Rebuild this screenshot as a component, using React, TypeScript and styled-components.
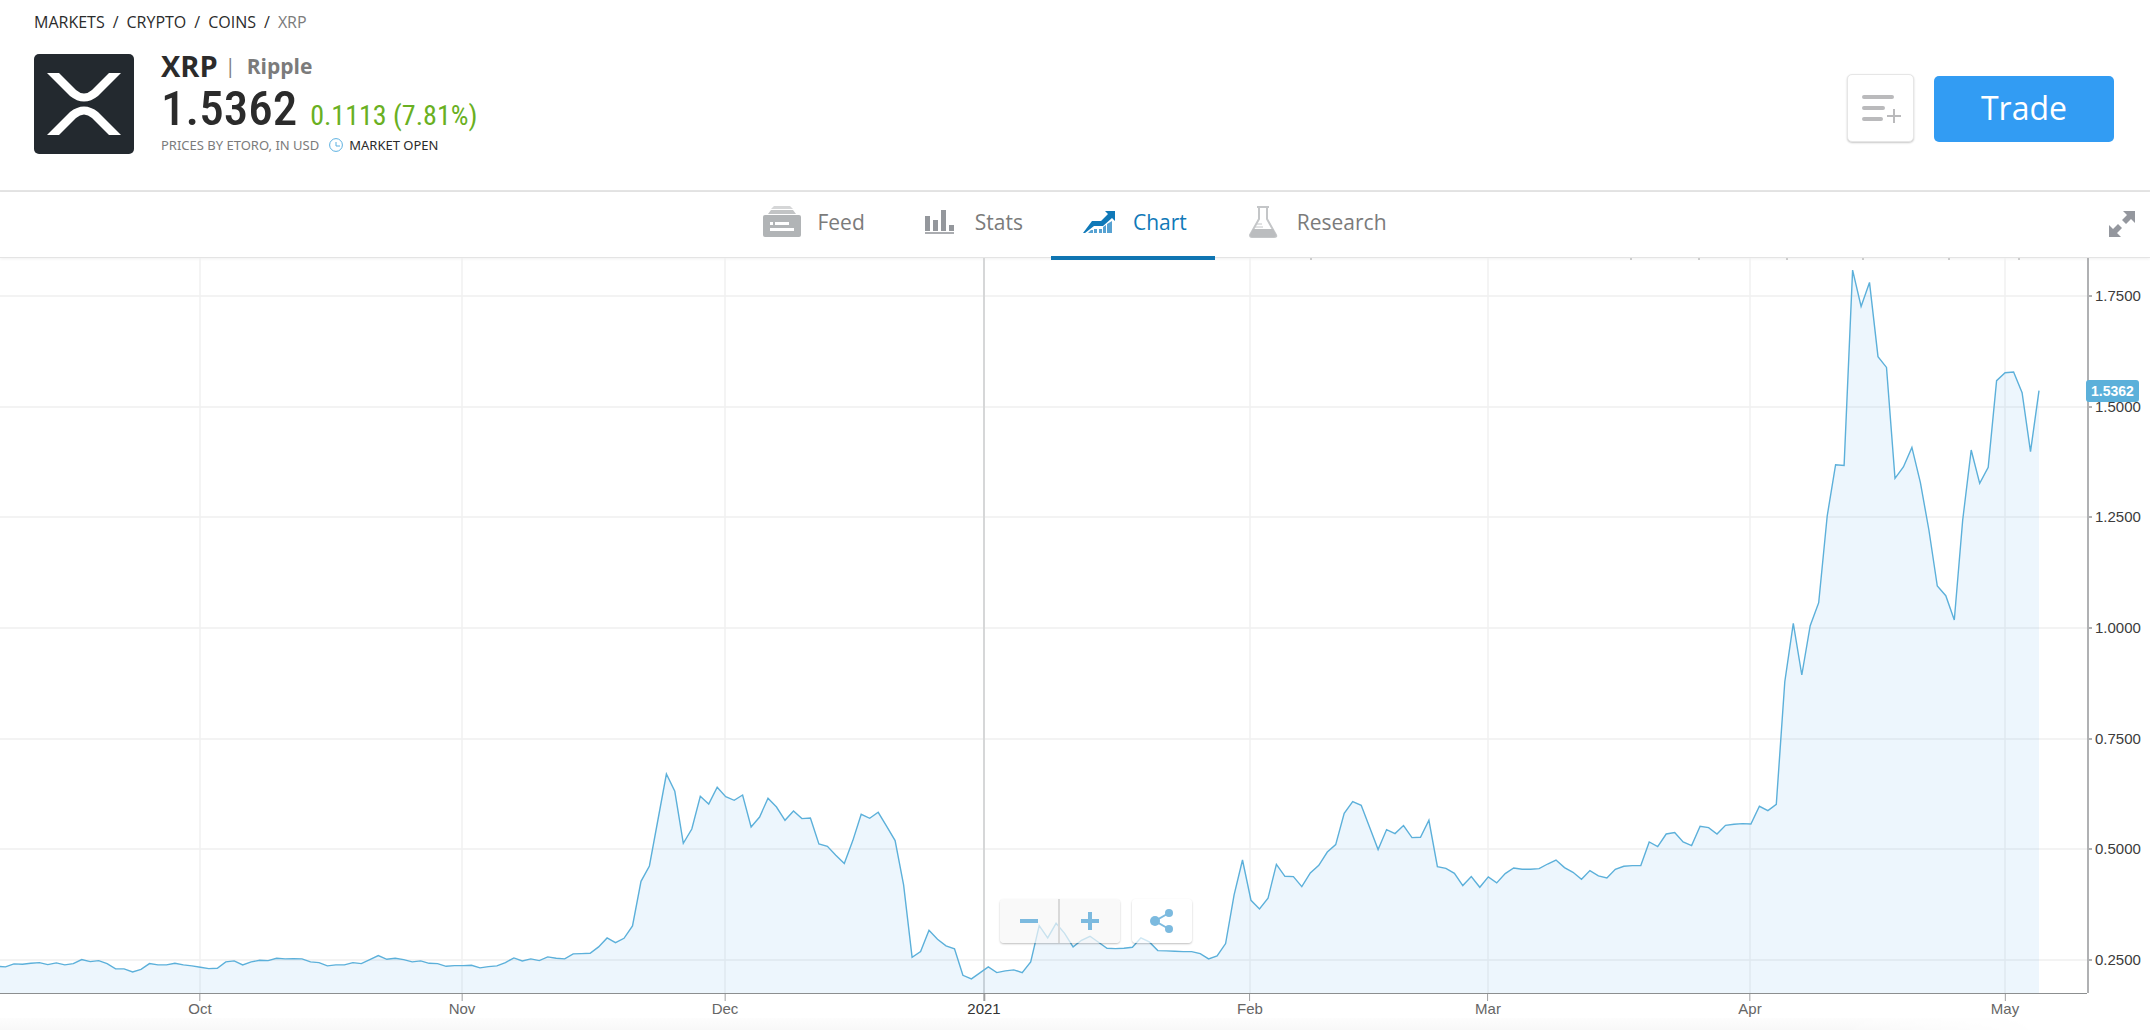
import React from "react";
import styled, { createGlobalStyle, css } from "styled-components";

const GlobalStyle = createGlobalStyle`
  *, *::before, *::after { box-sizing: border-box; }
  body { margin: 0; background: #fff; color: #2b2b2b; font-family: "Open Sans", "Noto Sans", sans-serif; }
  button { font-family: inherit; cursor: pointer; }
`;

const Page = styled.div`
  display: flex;
  flex-direction: column;
  min-height: 100vh;
  overflow: hidden;
`;

/* ---------- header ---------- */

const Header = styled.header`
  padding: 10px 36px 36px 34px;
  border-bottom: 2px solid #e4e4e4;
`;

const Breadcrumb = styled.nav`
  display: flex;
  gap: 8px;
  margin-bottom: 20px;
  font-size: 16px;
  line-height: 24px;
`;

const Crumb = styled.a`
  color: #2b2b2b;
  text-decoration: none;
`;

const CurrentCrumb = styled.span`
  color: #7b7b7b;
`;

const Instrument = styled.div`
  display: flex;
  align-items: flex-start;
`;

const Logo = styled.svg`
  display: block;
  flex: none;
  width: 100px;
  height: 100px;
  margin-right: 27px;
`;

const Info = styled.div`
  flex: 1;
`;

const TitleRow = styled.div`
  display: flex;
  align-items: center;
  height: 28px;
  line-height: 24px;
  padding-bottom: 4px;
`;

const Symbol = styled.h1`
  margin: 0;
  font-size: 29px;
  font-weight: 700;
  line-height: 24px;
`;

const Divider = styled.span`
  margin: 0 11px 0 7px;
  color: #7b7b7b;
  font-size: 20px;
`;

const FullName = styled.span`
  color: #7b7b7b;
  font-size: 21px;
  font-weight: 700;
`;

const PriceRow = styled.div`
  display: flex;
  align-items: baseline;
  gap: 13px;
  height: 54px;
  line-height: 54px;
  font-family: "Roboto Condensed", "Liberation Sans Narrow", Roboto, sans-serif;
`;

const Price = styled.span`
  font-size: 49px;
  font-weight: 500;
`;

const Change = styled.span`
  color: #69b022;
  font-size: 28px;
`;

const MetaRow = styled.div`
  display: flex;
  align-items: center;
  gap: 10px;
  color: #7b7b7b;
  font-family: "Noto Sans", "Open Sans", sans-serif;
  font-size: 13px;
  line-height: 18px;
`;

const MarketState = styled.span`
  display: flex;
  align-items: center;
  gap: 6px;
  color: #2b2b2b;
`;

const Actions = styled.div`
  display: flex;
  align-items: flex-end;
  gap: 20px;
  padding-top: 20px;
`;

const WatchlistButton = styled.button`
  display: flex;
  align-items: center;
  justify-content: center;
  width: 67px;
  height: 68px;
  padding: 0;
  border: 1px solid #e6e6e6;
  border-radius: 5px;
  background: #fff;
  box-shadow: 0 1px 2px rgba(0, 0, 0, 0.22);
`;

const TradeButton = styled.button`
  width: 180px;
  height: 66px;
  padding: 0 0 4px;
  border: 0;
  border-radius: 5px;
  background: #329cf3;
  color: #fff;
  font-size: 32px;
`;

/* ---------- tabs ---------- */

const TabBar = styled.div`
  display: grid;
  grid-template-columns: 1fr auto 1fr;
  height: 66px;
  border-bottom: 1px solid #e4e4e4;
  box-shadow: 0 1px 3px rgba(0, 0, 0, 0.06);
`;

const Tabs = styled.nav`
  display: flex;
  grid-column: 2;
`;

const Tab = styled.a<{ $active?: boolean }>`
  display: flex;
  align-items: center;
  gap: 14px;
  height: 68px;
  padding: 0 28px 8px;
  color: #7b7b7b;
  font-size: 21px;
  text-decoration: none;
  z-index: 1;
  ${(p) =>
    p.$active &&
    css`
      padding-bottom: 4px;
      border-bottom: 4px solid #0f75b2;
      color: #1079b8;
    `}
`;

const TabIcon = styled.svg`
  display: block;
  width: 40px;
  height: 32px;
`;

const ExpandButton = styled.button`
  justify-self: end;
  display: flex;
  align-items: center;
  padding: 0 14px 4px;
  border: 0;
  background: none;
`;

/* ---------- chart ---------- */

const Chart = styled.main`
  position: relative;
  flex: 1;
  display: grid;
  grid-template-columns: minmax(0, 1fr) 63px;
  grid-template-rows: minmax(400px, 1fr) 25px;
  font-family: "Liberation Sans", Arial, sans-serif;
  font-size: 15px;
  line-height: 16px;
`;

const PlotArea = styled.svg`
  display: block;
  width: 100%;
  height: 100%;
  contain: size;
`;

const PriceAxis = styled.div`
  position: relative;
  border-left: 2px solid #b0b1b3;
  color: #3c3c3c;
`;

const PriceMark = styled.span`
  position: absolute;
  left: 0;
  display: flex;
  align-items: center;
  gap: 3px;
  transform: translateY(-50%);

  &::before {
    content: "";
    width: 3px;
    height: 2px;
    background: #b0b1b3;
  }
`;

const PriceTag = styled.span`
  position: absolute;
  left: -3px;
  width: 53px;
  padding: 3px 0;
  border-radius: 3px;
  background: #5cb0da;
  color: #fff;
  font-size: 14px;
  font-weight: 700;
  text-align: center;
  transform: translateY(-50%);
`;

const TimeAxis = styled.div`
  position: relative;
  border-top: 1px solid #8c8f90;
`;

const TimeMark = styled.span<{ $strong?: boolean }>`
  position: absolute;
  top: 0;
  display: flex;
  flex-direction: column;
  align-items: center;
  color: ${(p) => (p.$strong ? "#333" : "#666")};
  transform: translateX(-50%);

  &::before {
    content: "";
    width: ${(p) => (p.$strong ? 2 : 1)}px;
    height: 7px;
    background: #a0a1a3;
  }
`;

const Toolbar = styled.div`
  position: absolute;
  left: 50%;
  bottom: 75px;
  display: flex;
  gap: 12px;
  transform: translateX(-75px);
`;

const ToolGroup = styled.div<{ $tinted?: boolean }>`
  display: flex;
  overflow: hidden;
  border-radius: 4px;
  background: ${(p) => (p.$tinted ? "rgba(247, 247, 247, 0.7)" : "rgba(255, 255, 255, 0.7)")};
  box-shadow: 0 1px 2px rgba(0, 0, 0, 0.25);
`;

const ToolButton = styled.button`
  display: flex;
  align-items: center;
  justify-content: center;
  width: 60px;
  height: 44px;
  padding: 0;
  border: 0;
  background: none;

  &:not(:last-child) {
    border-right: 2px solid #d9d9d9;
  }
`;

const BottomShade = styled.footer`
  width: 95%;
  height: 12px;
  background: linear-gradient(#fdfdfd, #f8f8f8);
  mask-image: linear-gradient(90deg, #000 90%, transparent);
`;

/* ---------- data ---------- */

// Price domain shown between the top and the bottom of the plot.
const TOP_PRICE = 1.836;
const BOTTOM_PRICE = 0.1753;
const LAST_PRICE = 1.5362;

// Daily closes, each counted in steps of STEP below BASE.
const BASE = 0.747;
const STEP = 1 / 1328;
const CLOSES = [
  679, 681, 672, 673, 670, 668, 674, 669, 675, 671, 659, 665, 662, 671, 687, 687, 696, 688, 671, 675, 675, 670, 675,
  678, 682, 686, 685, 666, 663, 675, 666, 661, 662, 655, 657, 656, 657, 666, 668, 678, 675, 675, 668, 671, 659, 647,
  658, 655, 659, 666, 663, 670, 671, 679, 677, 677, 676, 684, 680, 678, 668, 654, 663, 657, 662, 651, 655, 657, 642,
  641, 640, 621, 594, 608, 595, 558, 424, 378, 240, 102, 154, 310, 267, 169, 192, 142, 170, 181, 165, 261, 231, 175,
  201, 241, 213, 236, 234, 312, 319, 346, 371, 302, 223, 235, 217, 259, 302, 435, 652, 635, 571, 598, 618, 627, 706,
  717, 699, 681, 698, 693, 690, 698, 666, 557, 594, 550, 580, 621, 601, 589, 607, 625, 626, 625, 622, 594, 606, 632,
  633, 634, 635, 635, 641, 657, 648, 611, 465, 360, 481, 507, 475, 373, 409, 410, 440, 399, 376, 336, 314, 220, 185,
  196, 262, 329, 269, 281, 257, 293, 292, 241, 380, 385, 400, 437, 410, 442, 411, 429, 401, 384, 388, 388, 386, 372,
  360, 383, 397, 418, 392, 408, 414, 388, 379, 377, 377, 306, 320, 282, 278, 306, 317, 259, 263, 282, 256, 253, 251,
  252, 199, 212, 193, -175, -350, -195, -343, -412, -672, -826, -824, -1410, -1301, -1373, -1150, -1118, -785, -819,
  -878, -772, -630, -462, -433, -360, -660, -870, -770, -818, -1078, -1102, -1104, -1042, -865, -1048,
].map((steps) => BASE - steps * STEP);

const PLOT_W = 2087;
const PLOT_H = 735;
const FIRST_X = -3;
const LAST_X = 2039;

const MONTHS = [
  { label: "Oct", x: 200 },
  { label: "Nov", x: 462 },
  { label: "Dec", x: 725 },
  { label: "2021", x: 984, strong: true },
  { label: "Feb", x: 1250 },
  { label: "Mar", x: 1488 },
  { label: "Apr", x: 1750 },
  { label: "May", x: 2005 },
];

const PRICES = [1.75, 1.5, 1.25, 1, 0.75, 0.5, 0.25];
const EVENT_STUBS = [1311, 1631, 1699, 1787, 1863, 1949, 2019];

const ratio = (price: number) => (TOP_PRICE - price) / (TOP_PRICE - BOTTOM_PRICE);
const percent = (value: number) => `${value * 100}%`;

const points = CLOSES.map((price, i) => {
  const x = FIRST_X + ((LAST_X - FIRST_X) * i) / (CLOSES.length - 1);
  return `${x.toFixed(1)},${(ratio(price) * PLOT_H).toFixed(1)}`;
}).join(" ");

/* ---------- parts ---------- */

const CRUMBS = ["MARKETS", "CRYPTO", "COINS"];

const FeedIcon = () => (
  <TabIcon viewBox="0 0 40 32" aria-hidden="true">
    <path d="M11 0h16l3 3H8z" fill="#d5d6d7" />
    <path d="M8 4h22l3 4H5z" fill="#c2c4c5" />
    <rect x="0" y="9" width="38" height="22" rx="2" fill="#b1b4b6" />
    <path d="M7 16h3v3H7zM12 16h14v3H12zM7 22h24v3H7z" fill="#fff" />
  </TabIcon>
);

const StatsIcon = () => (
  <TabIcon viewBox="0 0 40 32" aria-hidden="true">
    <path d="M4 10h5v15H4zM12 14h5v11h-5zM20 4h5v21h-5zM28 19h5v6h-5z" fill="#94979c" />
    <path d="M4 26h29v2H4z" fill="#aaacb0" />
  </TabIcon>
);

const ChartIcon = () => (
  <TabIcon viewBox="0 0 40 32" aria-hidden="true">
    <path d="M4 27 13 15h9l7-7-3-3h10v10l-3-3-9 8h-9L6 27z" fill="#1079b8" />
    <path d="M9 27l3-3h2v3zM15 23h3v4h-3zM20 23h3v4h-3zM24 21l3-2v8h-3zM28 18l5-3v12h-5z" fill="#57a2d2" />
  </TabIcon>
);

const ResearchIcon = () => (
  <TabIcon viewBox="0 0 40 32" aria-hidden="true">
    <path d="M16 2v11L7 29q0 2 2 2h22q3 0 2-2L24 13V2" fill="#fff" stroke="#c4c6c8" strokeWidth="2" />
    <path d="M14 1h12" stroke="#c4c6c8" strokeWidth="2" />
    <path d="M10 23h20l3 6q0 2-2 2H9q-2 0-2-2z" fill="#bbbdbf" />
    <path d="M14 18h5M12 21h8" stroke="#c4c6c8" strokeWidth="1" />
  </TabIcon>
);

const TABS = [
  { label: "Feed", Icon: FeedIcon },
  { label: "Stats", Icon: StatsIcon },
  { label: "Chart", Icon: ChartIcon, active: true },
  { label: "Research", Icon: ResearchIcon },
];

function InstrumentHeader() {
  return (
    <Header>
      <Breadcrumb aria-label="Breadcrumb">
        {CRUMBS.map((name) => (
          <React.Fragment key={name}>
            <Crumb href="#">{name}</Crumb>
            <span>/</span>
          </React.Fragment>
        ))}
        <CurrentCrumb aria-current="page">XRP</CurrentCrumb>
      </Breadcrumb>
      <Instrument>
        <Logo viewBox="0 0 100 100" aria-hidden="true">
          <rect width="100" height="100" rx="5" fill="#23292f" />
          <path
            d="M13 19h12l17 17q8 7 16 0l17-17h12L64 42q-14 11-28 0zM13 81h12l17-17q8-7 16 0l17 17h12L64 58q-14-11-28 0z"
            fill="#fff"
          />
        </Logo>
        <Info>
          <TitleRow>
            <Symbol>XRP</Symbol>
            <Divider>|</Divider>
            <FullName>Ripple</FullName>
          </TitleRow>
          <PriceRow>
            <Price>1.5362</Price>
            <Change>0.1113 (7.81%)</Change>
          </PriceRow>
          <MetaRow>
            <span>PRICES BY ETORO, IN USD</span>
            <MarketState>
              <svg width="14" height="14" viewBox="0 0 14 14" fill="none" stroke="#5cb0e0" aria-hidden="true">
                <circle cx="7" cy="7" r="6.4" />
                <path d="M7 4v4h4" />
              </svg>
              MARKET OPEN
            </MarketState>
          </MetaRow>
        </Info>
        <Actions>
          <WatchlistButton aria-label="Add to watchlist">
            <svg width="42" height="32" viewBox="0 0 42 32" aria-hidden="true">
              <g stroke="#bababc" strokeWidth="4" strokeLinecap="round">
                <path d="M4 5h28M4 16h19M4 27h17" />
              </g>
              <path d="M34 17v14M27 24h14" stroke="#bababc" strokeWidth="2" />
            </svg>
          </WatchlistButton>
          <TradeButton>Trade</TradeButton>
        </Actions>
      </Instrument>
    </Header>
  );
}

function PriceChart() {
  return (
    <Chart>
      <PlotArea viewBox={`0 0 ${PLOT_W} ${PLOT_H}`} preserveAspectRatio="none" role="img" aria-label="XRP price">
        {EVENT_STUBS.map((x) => (
          <rect key={x} x={x - 1} y="0" width="2" height="2" fill="#ccc" />
        ))}
        {PRICES.map((p) => {
          const y = Math.round(ratio(p) * PLOT_H);
          return <path key={p} d={`M0 ${y}H${PLOT_W}`} stroke="#f3f3f3" strokeWidth="2" />;
        })}
        {MONTHS.map((m) => (
          <path
            key={m.label}
            d={`M${m.x} 0V${PLOT_H}`}
            stroke={m.strong ? "#d6d7d8" : "#f1f1f1"}
            strokeWidth={m.strong ? 2 : 1.5}
          />
        ))}
        <polygon
          points={`${FIRST_X},${PLOT_H} ${points} ${LAST_X},${PLOT_H}`}
          fill="#4ba5eb"
          fillOpacity="0.1"
        />
        <polyline
          points={points}
          fill="none"
          stroke="#5cb0da"
          strokeWidth="1.4"
          vectorEffect="non-scaling-stroke"
        />
      </PlotArea>
      <PriceAxis>
        {PRICES.map((p) => (
          <PriceMark key={p} style={{ top: percent(ratio(p)) }}>
            {p.toFixed(4)}
          </PriceMark>
        ))}
        <PriceTag style={{ top: percent(ratio(LAST_PRICE)) }}>{LAST_PRICE.toFixed(4)}</PriceTag>
      </PriceAxis>
      <TimeAxis>
        {MONTHS.map((m) => (
          <TimeMark key={m.label} $strong={m.strong} style={{ left: percent(m.x / PLOT_W) }}>
            {m.label}
          </TimeMark>
        ))}
      </TimeAxis>
      <Toolbar>
        <ToolGroup $tinted>
          <ToolButton aria-label="Zoom out">
            <svg width="18" height="18" viewBox="0 0 18 18" aria-hidden="true">
              <path d="M0 9h18" stroke="#7cbadf" strokeWidth="4" />
            </svg>
          </ToolButton>
          <ToolButton aria-label="Zoom in">
            <svg width="18" height="18" viewBox="0 0 18 18" aria-hidden="true">
              <path d="M0 9h18M9 0v18" stroke="#7cbadf" strokeWidth="4" />
            </svg>
          </ToolButton>
        </ToolGroup>
        <ToolGroup>
          <ToolButton aria-label="Share">
            <svg width="24" height="26" viewBox="0 0 24 26" fill="#7cbadf" aria-hidden="true">
              <path d="M19 5 5 13l14 8" fill="none" stroke="#7cbadf" strokeWidth="2" />
              <circle cx="5" cy="13" r="5" />
              <circle cx="19" cy="5" r="4" />
              <circle cx="19" cy="21" r="4" />
            </svg>
          </ToolButton>
        </ToolGroup>
      </Toolbar>
    </Chart>
  );
}

export default function App() {
  return (
    <Page>
      <GlobalStyle />
      <InstrumentHeader />
      <TabBar>
        <Tabs aria-label="Instrument sections">
          {TABS.map(({ label, Icon, active }) => (
            <Tab key={label} href="#" $active={active} aria-current={active ? "page" : undefined}>
              <Icon />
              {label}
            </Tab>
          ))}
        </Tabs>
        <ExpandButton aria-label="Full screen">
          <svg width="28" height="28" viewBox="0 0 28 28" fill="#94979e" aria-hidden="true">
            <path d="M15 1h12v12l-4-4-5 5-4-4 5-5zM1 27V15l4 4 5-5 4 4-5 5 4 4z" />
          </svg>
        </ExpandButton>
      </TabBar>
      <PriceChart />
      <BottomShade />
    </Page>
  );
}
